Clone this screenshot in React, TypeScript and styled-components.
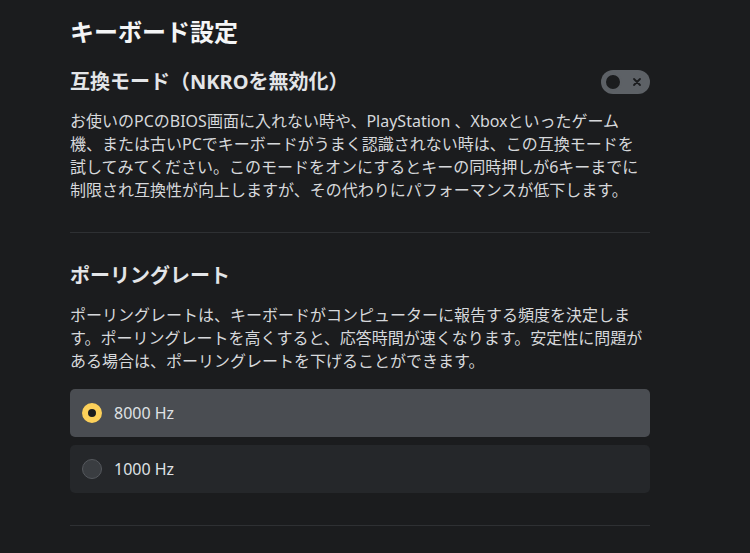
import styled, { createGlobalStyle } from "styled-components";

const GlobalStyle = createGlobalStyle`
  html, body {
    margin: 0;
    background: #1b1c1e;
    font-family: "Noto Sans", "Noto Sans CJK JP", sans-serif;
  }
`

const Page = styled.main`
  padding: 14px 100px 0 70px;
  width: 580px;
  color: #dcdee1;
`

const Title = styled.h1`
  margin: 0 0 8px;
  font-size: 24px;
  font-weight: 700;
  line-height: 36px;
  color: #f4f5f6;
`

const Section = styled.section`
  padding: 9px 0 30px;
  border-bottom: 1px solid #2e3033;

  & + & {
    padding-top: 28px;
    padding-bottom: 32px;
  }
`

const HeaderRow = styled.div`
  display: flex;
  align-items: center;
  justify-content: space-between;
  margin-bottom: 13px;
`

const Heading = styled.h2`
  margin: 0;
  font-size: 20px;
  font-weight: 700;
  line-height: 30px;
  color: #e3e5e8;
`

const Text = styled.p`
  margin: 0;
  font-size: 16px;
  line-height: 23px;
  color: #d6d8db;
`

const Toggle = styled.button`
  display: flex;
  align-items: center;
  justify-content: space-between;
  width: 49px;
  height: 24px;
  padding: 0 8px 0 3px;
  border: none;
  border-radius: 12px;
  background: #5d6166;
  cursor: pointer;
`

const Knob = styled.span`
  width: 14px;
  height: 14px;
  border-radius: 50%;
  border: 2px solid #5d6166;
  background: #1b1c1e;
`

const Options = styled.div`
  display: flex;
  flex-direction: column;
  gap: 8px;
  margin-top: 16px;
`

const Option = styled.label<{ $active?: boolean }>`
  display: flex;
  align-items: center;
  gap: 12px;
  height: 48px;
  padding: 0 12px;
  border-radius: 5px;
  background: ${(p) => (p.$active ? "#4a4d52" : "#25272a")};
  font-size: 16px;
  color: #dfe1e4;
  cursor: pointer;
`

const Radio = styled.span<{ $checked?: boolean }>`
  box-sizing: border-box;
  width: 20px;
  height: 20px;
  border-radius: 50%;
  ${(p) =>
    p.$checked
      ? `background: #1b1c1e; border: 6px solid #fcd05a;`
      : `background: #3a3d41; border: 1px solid #55585d;`}
`

const rates = [
  { label: "8000 Hz", active: true },
  { label: "1000 Hz", active: false },
]

const App = () => {
  return (
    <>
      <GlobalStyle />
      <Page>
        <Title>キーボード設定</Title>
        <Section>
          <HeaderRow>
            <Heading>互換モード（NKROを無効化）</Heading>
            <Toggle aria-label="互換モード">
              <Knob />
              <svg width="10" height="10" viewBox="0 0 10 10">
                <path d="M2 2 L8 8 M8 2 L2 8" stroke="#1b1c1e" strokeWidth="1.8" strokeLinecap="round" />
              </svg>
            </Toggle>
          </HeaderRow>
          <Text>
            お使いのPCのBIOS画面に入れない時や、PlayStation 、Xboxといったゲーム<br />
            機、または古いPCでキーボードがうまく認識されない時は、この互換モードを<br />
            試してみてください。このモードをオンにするとキーの同時押しが6キーまでに<br />
            制限され互換性が向上しますが、その代わりにパフォーマンスが低下します。
          </Text>
        </Section>
        <Section>
          <HeaderRow>
            <Heading>ポーリングレート</Heading>
          </HeaderRow>
          <Text>
            ポーリングレートは、キーボードがコンピューターに報告する頻度を決定しま<br />
            す。ポーリングレートを高くすると、応答時間が速くなります。安定性に問題が<br />
            ある場合は、ポーリングレートを下げることができます。
          </Text>
          <Options>
            {rates.map((r) => (
              <Option key={r.label} $active={r.active}>
                <Radio $checked={r.active} />
                {r.label}
              </Option>
            ))}
          </Options>
        </Section>
      </Page>
    </>
  )
}

export default App
